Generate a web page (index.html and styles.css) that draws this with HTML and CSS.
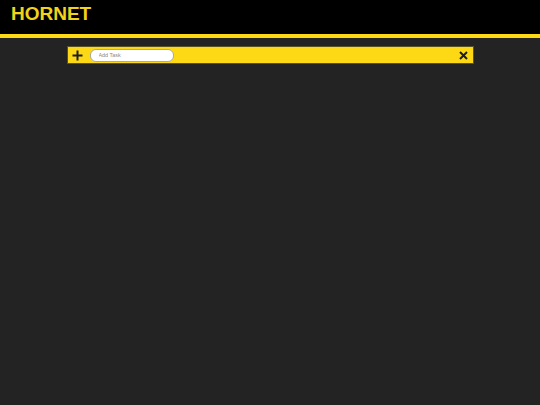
FILE: index.html
```html
<!DOCTYPE html>
<html lang="en">
<head>
<meta charset="utf-8">
<title>Hornet</title>
<link rel="stylesheet" href="styles.css">
</head>
<body>
<header class="header">
  <h1 class="brand">HORNET</h1>
</header>
<main class="main">
  <div class="toolbar">
    <button class="icon-btn add-btn" aria-label="Add">
      <svg width="11" height="11" viewBox="0 0 11 11"><path d="M5.5 0.5V10.5M0.5 5.5H10.5" stroke="#1e1e1e" stroke-width="2" fill="none"/></svg>
    </button>
    <input class="task-input" type="text" placeholder="Add Task">
    <span class="spacer"></span>
    <button class="icon-btn close-btn" aria-label="Close">
      <svg width="9" height="9" viewBox="0 0 9 9"><path d="M1 1L8 8M8 1L1 8" stroke="#1e1e1e" stroke-width="2" fill="none"/></svg>
    </button>
  </div>
</main>
</body>
</html>
```

FILE: styles.css
```css
html, body {
  margin: 0;
  padding: 0;
}
body {
  background: #232323;
  font-family: "Liberation Sans", Arial, sans-serif;
  min-height: 405px;
}
.header {
  background: #000;
  border-bottom: 4px solid #fcd914;
  padding: 3px 11px 9px;
}
.brand {
  margin: 0;
  font-size: 19px;
  line-height: 22px;
  font-weight: bold;
  color: #f2d31a;
}
.main {
  padding-top: 8px;
}
.toolbar {
  width: 405px;
  height: 16px;
  margin: 0 auto;
  background: #fcd914;
  border: 1px solid #5a5120;
  display: flex;
  align-items: center;
}
.icon-btn {
  background: none;
  border: none;
  padding: 0;
  margin: 0;
  display: flex;
  align-items: center;
  justify-content: center;
}
.add-btn {
  margin-left: 4px;
}
.task-input {
  margin-left: 7px;
  width: 84px;
  height: 13px;
  box-sizing: border-box;
  border: 1px solid #a9a9a9;
  border-radius: 6px;
  background: #fff;
  padding: 0 0 0 8px;
  font-family: "Liberation Sans", Arial, sans-serif;
  font-size: 5.4px;
  outline: none;
}
.task-input::placeholder {
  color: #8a8a8a;
}
.spacer {
  flex: 1;
}
.close-btn {
  margin-right: 5px;
}
```
